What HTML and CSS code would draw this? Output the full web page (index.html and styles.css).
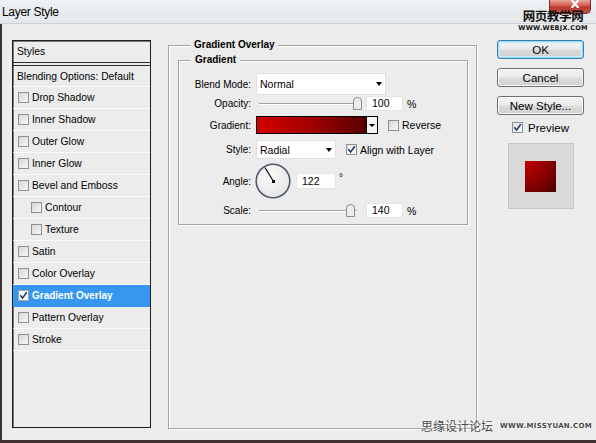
FILE: index.html
```html
<!DOCTYPE html>
<html>
<head>
<meta charset="utf-8">
<link rel="stylesheet" href="styles.css">
</head>
<body>
<div class="window">
  <div class="titlebar">
    <span class="title">Layer Style</span>
    <div class="close"><svg viewBox="0 0 10 8" width="10" height="8"><path d="M1.5 0 L8.5 8 M8.5 0 L1.5 8" stroke="#fff" stroke-width="2"/></svg></div>
  </div>
  <div class="frame">
    <div class="stylelist">
      <div class="li head">Styles</div>
      <div class="li blend">Blending Options: Default</div>
      <div class="li"><span class="cb"></span>Drop Shadow</div>
      <div class="li"><span class="cb"></span>Inner Shadow</div>
      <div class="li"><span class="cb"></span>Outer Glow</div>
      <div class="li"><span class="cb"></span>Inner Glow</div>
      <div class="li"><span class="cb"></span>Bevel and Emboss</div>
      <div class="li sub"><span class="cb"></span>Contour</div>
      <div class="li sub"><span class="cb"></span>Texture</div>
      <div class="li"><span class="cb"></span>Satin</div>
      <div class="li"><span class="cb"></span>Color Overlay</div>
      <div class="li sel"><span class="cb on"><svg viewBox="0 0 9 9" width="9" height="9"><path d="M1.3 4.3 L3.6 7 L7.8 1.2" fill="none" stroke="#1d3a6b" stroke-width="1.5"/></svg></span>Gradient Overlay</div>
      <div class="li"><span class="cb"></span>Pattern Overlay</div>
      <div class="li"><span class="cb"></span>Stroke</div>
    </div>

    <fieldset class="group outer">
      <legend class="lg-outer">Gradient Overlay</legend>
      <fieldset class="group inner">
        <legend class="lg-inner">Gradient</legend>
        <div class="frm">
          <div class="row r1">
            <span class="lbl">Blend Mode:</span>
            <div class="select wide"><span>Normal</span><span class="arr"></span></div>
          </div>
          <div class="row r2">
            <span class="lbl">Opacity:</span>
            <div class="ctl">
              <div class="slider"><span class="thumb t-op"><svg viewBox="0 0 9 13" width="9" height="13"><path d="M0.5 12.5 V4 Q0.5 0.5 4.5 0.5 Q8.5 0.5 8.5 4 V12.5 Z" fill="#ececec" stroke="#8c8c8c"/></svg></span></div>
              <span class="num">100</span><span class="unit">%</span>
            </div>
          </div>
          <div class="row r3">
            <span class="lbl">Gradient:</span>
            <div class="ctl">
              <div class="grad"><span class="fill"></span><span class="dd"><span class="arr sm"></span></span></div>
              <span class="cb gap"></span><span class="cbl">Reverse</span>
            </div>
          </div>
          <div class="row r4">
            <span class="lbl">Style:</span>
            <div class="ctl">
              <div class="select narrow"><span>Radial</span><span class="arr"></span></div>
              <span class="cb on gap"><svg viewBox="0 0 9 9" width="9" height="9"><path d="M1.3 4.3 L3.6 7 L7.8 1.2" fill="none" stroke="#1d3a6b" stroke-width="1.5"/></svg></span><span class="cbl">Align with Layer</span>
            </div>
          </div>
          <div class="row r5">
            <span class="lbl">Angle:</span>
            <div class="ctl">
              <svg class="dial" viewBox="0 0 36 36" width="36" height="36">
                <defs><radialGradient id="dg" cx="0.4" cy="0.35" r="0.7"><stop offset="0" stop-color="#fbfbfb"/><stop offset="1" stop-color="#e4e4e4"/></radialGradient></defs>
                <circle cx="18" cy="18" r="16.8" fill="url(#dg)" stroke="#4f5a6d" stroke-width="1.6"/>
                <line x1="18.5" y1="18.5" x2="10" y2="4.6" stroke="#000" stroke-width="1.1"/>
                <rect x="17" y="17" width="3" height="3" fill="#000"/>
              </svg>
              <span class="num ang">122</span><span class="deg">°</span>
            </div>
          </div>
          <div class="row r6">
            <span class="lbl">Scale:</span>
            <div class="ctl">
              <div class="slider"><span class="thumb t-sc"><svg viewBox="0 0 9 13" width="9" height="13"><path d="M0.5 12.5 V4 Q0.5 0.5 4.5 0.5 Q8.5 0.5 8.5 4 V12.5 Z" fill="#ececec" stroke="#8c8c8c"/></svg></span></div>
              <span class="num">140</span><span class="unit">%</span>
            </div>
          </div>
        </div>
      </fieldset>
    </fieldset>

    <div class="side">
      <div class="btn ok">OK</div>
      <div class="btn">Cancel</div>
      <div class="btn last">New Style...</div>
      <div class="prevrow"><span class="cb on"><svg viewBox="0 0 9 9" width="9" height="9"><path d="M1.3 4.3 L3.6 7 L7.8 1.2" fill="none" stroke="#1d3a6b" stroke-width="1.5"/></svg></span><span class="prevlbl">Preview</span></div>
      <div class="preview"><span class="swatch"></span></div>
    </div>
  </div>

  <div class="wm-top"><div class="wm-cn">网页教学网</div><div class="wm-url">WWW.WEBJX.COM</div></div>
  <div class="wm-bottom"><span class="wm-cn2">思缘设计论坛</span><span class="wm-url2">WWW.MISSYUAN.COM</span></div>
</div>
</body>
</html>
```

FILE: styles.css
```css
* { box-sizing: border-box; }
html, body { margin: 0; padding: 0; }
body {
  width: 596px;
  height: 443px;
  overflow: hidden;
  background: #ececec;
  font-family: "Liberation Sans", Arial, sans-serif;
  font-size: 10px;
  color: #000;
}
.window {
  position: relative;
  width: 596px;
  height: 443px;
  background: #ececec;
}
.titlebar {
  height: 24px;
  display: flex;
  align-items: flex-start;
  background: linear-gradient(#eff1f3, #e4e7ea);
  border-bottom: 1px solid #cfd3d7;
}
.title {
  font-size: 12px;
  line-height: 14px;
  padding: 5px 0 0 2px;
  letter-spacing: -0.3px;
}
.close {
  margin-left: auto;
  margin-right: 5px;
  width: 42px;
  height: 14px;
  border: 1px solid #7a2c26;
  border-top: none;
  border-radius: 0 0 5px 5px;
  background: linear-gradient(#e6a397, #cf5a4c 45%, #b5362b 55%, #c8554a);
  display: flex;
  justify-content: center;
  align-items: flex-start;
}
.close svg { display: block; margin-left: 10px; }
.frame {
  height: 419px;
  display: flex;
  align-items: flex-start;
  padding: 16px 0 0 10px;
  border-left: 2px solid #3f3230;
  border-bottom: 3px solid #3f3230;
}

/* style list */
.stylelist {
  flex: none;
  width: 139px;
  height: 388px;
  border: 1px solid #1e1e1e;
  box-shadow: inset 1px 1px 0 #7a7a7a;
  background: #ececec;
}
.li {
  height: 22px;
  display: flex;
  align-items: center;
  padding-left: 5px;
  border-bottom: 1px solid #fbfbfb;
  font-size: 10.3px;
  white-space: nowrap;
}
.li.head {
  padding-left: 4px;
  border-bottom: 1px solid #2a2a2a;
}
.li.blend {
  margin-top: 2px;
  padding-left: 4px;
  border-top: 1px solid #2a2a2a;
}
.li.sub { padding-left: 18px; }
.li.sel {
  background: #3797f0;
  border-bottom-color: #3797f0;
  color: #fff;
  font-weight: bold;
  font-size: 10px;
}
.cb {
  flex: none;
  width: 11px;
  height: 11px;
  margin-right: 3px;
  border: 1px solid #8e8f8f;
  background: linear-gradient(135deg, #d6d6d6, #f8f8f8);
  display: inline-flex;
  align-items: center;
  justify-content: center;
}
.cb.on { background: linear-gradient(135deg, #e4e4e4, #fcfcfc); }
.li.sel .cb { background: #fff; border-color: #9aa3ad; }

/* group boxes */
.group {
  margin: 0;
  border: 1px solid #a3a3a3;
  box-shadow: 1px 1px 0 #fff, inset 1px 1px 0 #fff;
  min-width: 0;
}
.outer {
  flex: none;
  margin: -2px 0 0 17px;
  width: 309px;
  height: 391px;
  padding: 1px 0 0 9px;
}
.inner {
  width: 290px;
  height: 172px;
  padding: 0;
}
legend {
  font-weight: bold;
  font-size: 10px;
  line-height: 14px;
  background: #ececec;
}
.lg-outer { margin-left: 13px; padding: 0 3px; }
.lg-inner { margin-left: 12px; padding: 0 4px; }

/* form */
.frm {
  display: flex;
  flex-direction: column;
  padding-top: 6px;
}
.row {
  display: grid;
  grid-template-columns: 72px auto;
  column-gap: 5px;
  align-items: center;
}
.r1 { height: 22px; }
.r2 { height: 15px; margin-top: 1px; }
.r3 { height: 18px; margin-top: 5px; }
.r4 { height: 19px; margin-top: 6px; }
.r5 { height: 36px; margin-top: 4px; }
.r6 { height: 15px; margin-top: 4px; }
.lbl {
  text-align: right;
  font-size: 10px;
  white-space: nowrap;
}
.ctl {
  display: flex;
  align-items: center;
}
.select {
  background: #fff;
  border: 1px solid #e0e0e0;
  display: flex;
  align-items: center;
  justify-content: space-between;
  padding: 0 3px 0 3px;
  font-size: 10.5px;
}
.select.wide { width: 130px; height: 22px; }
.select.narrow { width: 80px; height: 19px; }
.arr {
  width: 0;
  height: 0;
  border-left: 3.5px solid transparent;
  border-right: 3.5px solid transparent;
  border-top: 4px solid #000;
}
.arr.sm {
  border-left-width: 3px;
  border-right-width: 3px;
  border-top-width: 3px;
}
.slider {
  position: relative;
  width: 106px;
  height: 15px;
  flex: none;
}
.slider::before {
  content: "";
  position: absolute;
  left: 3px;
  right: 5px;
  top: 7px;
  height: 1px;
  background: #a0a0a0;
  box-shadow: 0 1px 0 #fff;
}
.thumb {
  position: absolute;
  top: 1px;
  width: 9px;
  height: 13px;
  display: block;
}
.thumb svg { display: block; }
.t-op { left: 97px; }
.t-sc { left: 90px; }
.num {
  width: 37px;
  height: 15px;
  margin-left: 4px;
  padding-left: 5px;
  background: #fff;
  border: 1px solid #e4e4e4;
  font-size: 10.5px;
  line-height: 13px;
}
.num.ang {
  width: 40px;
  height: 16px;
  margin-left: 5px;
  line-height: 14px;
}
.unit {
  margin-left: 4px;
  font-size: 10.5px;
}
.deg {
  margin-left: 3px;
  font-size: 10px;
  align-self: flex-start;
  margin-top: 9px;
}
.dial { margin-left: -1px; display: block; }
.grad {
  width: 122px;
  height: 18px;
  border: 1px solid #000;
  display: flex;
}
.grad .fill {
  flex: 1;
  background: linear-gradient(to right, #d40000, #9a0000 55%, #560000);
}
.grad .dd {
  width: 11px;
  border-left: 1px solid #000;
  background: #f4f4f4;
  display: flex;
  align-items: center;
  justify-content: center;
}
.cb.gap { margin-left: 10px; }
.cbl { font-size: 10.5px; white-space: nowrap; }

/* side */
.side {
  flex: none;
  width: 87px;
  margin-left: 20px;
  display: flex;
  flex-direction: column;
  align-items: center;
}
.btn {
  width: 87px;
  height: 19px;
  margin-bottom: 9px;
  border: 1px solid #707070;
  border-radius: 3px;
  background: linear-gradient(#f3f3f3, #ebebeb 48%, #dcdcdc 52%, #d0d0d0);
  box-shadow: inset 0 0 0 1px #fafafa;
  display: flex;
  align-items: center;
  justify-content: center;
  font-size: 11.5px;
}
.btn.ok {
  border-color: #3c7fb1;
  box-shadow: inset 0 0 0 1px #8fdcf8, inset 0 0 0 2px #cdeffb;
  background: linear-gradient(#f2f2f2, #eaeaea 48%, #dadada 52%, #cecece);
}
.btn.last { margin-bottom: 0; }
.prevrow {
  margin-top: 6px;
  height: 13px;
  display: flex;
  align-items: center;
}
.prevlbl { font-size: 11.5px; margin-left: 2px; }
.preview {
  margin-top: 9px;
  width: 66px;
  height: 66px;
  background: #d9d9d9;
  border: 1px solid #c6c6c6;
  display: flex;
  align-items: center;
  justify-content: center;
}
.swatch {
  width: 31px;
  height: 31px;
  background: radial-gradient(circle at 0 0, #c40000, #8a0000 55%, #4a0000 100%);
}

/* watermarks */
.wm-top {
  position: absolute;
  left: 517px;
  top: 8px;
  width: 72px;
  text-align: center;
}
.wm-cn {
  font-family: "Noto Sans CJK SC", sans-serif;
  font-size: 12.5px;
  font-weight: bold;
  line-height: 15px;
  letter-spacing: -0.4px;
  color: #111;
}
.wm-url {
  font-family: "DejaVu Sans", sans-serif;
  font-size: 6.5px;
  font-weight: bold;
  line-height: 8px;
  letter-spacing: 0.2px;
  color: #111;
  margin-top: 1px;
}
.wm-bottom {
  position: absolute;
  left: 421px;
  top: 418px;
  display: flex;
  align-items: center;
  color: #474747;
  text-shadow: 0 0 2px #fff, 0 0 2px #fff;
}
.wm-cn2 {
  font-family: "Noto Sans CJK SC", sans-serif;
  font-size: 12px;
  line-height: 16px;
}
.wm-url2 {
  margin-left: 7px;
  font-family: "DejaVu Sans", sans-serif;
  font-size: 7px;
  font-weight: bold;
  letter-spacing: 0.3px;
}
```
